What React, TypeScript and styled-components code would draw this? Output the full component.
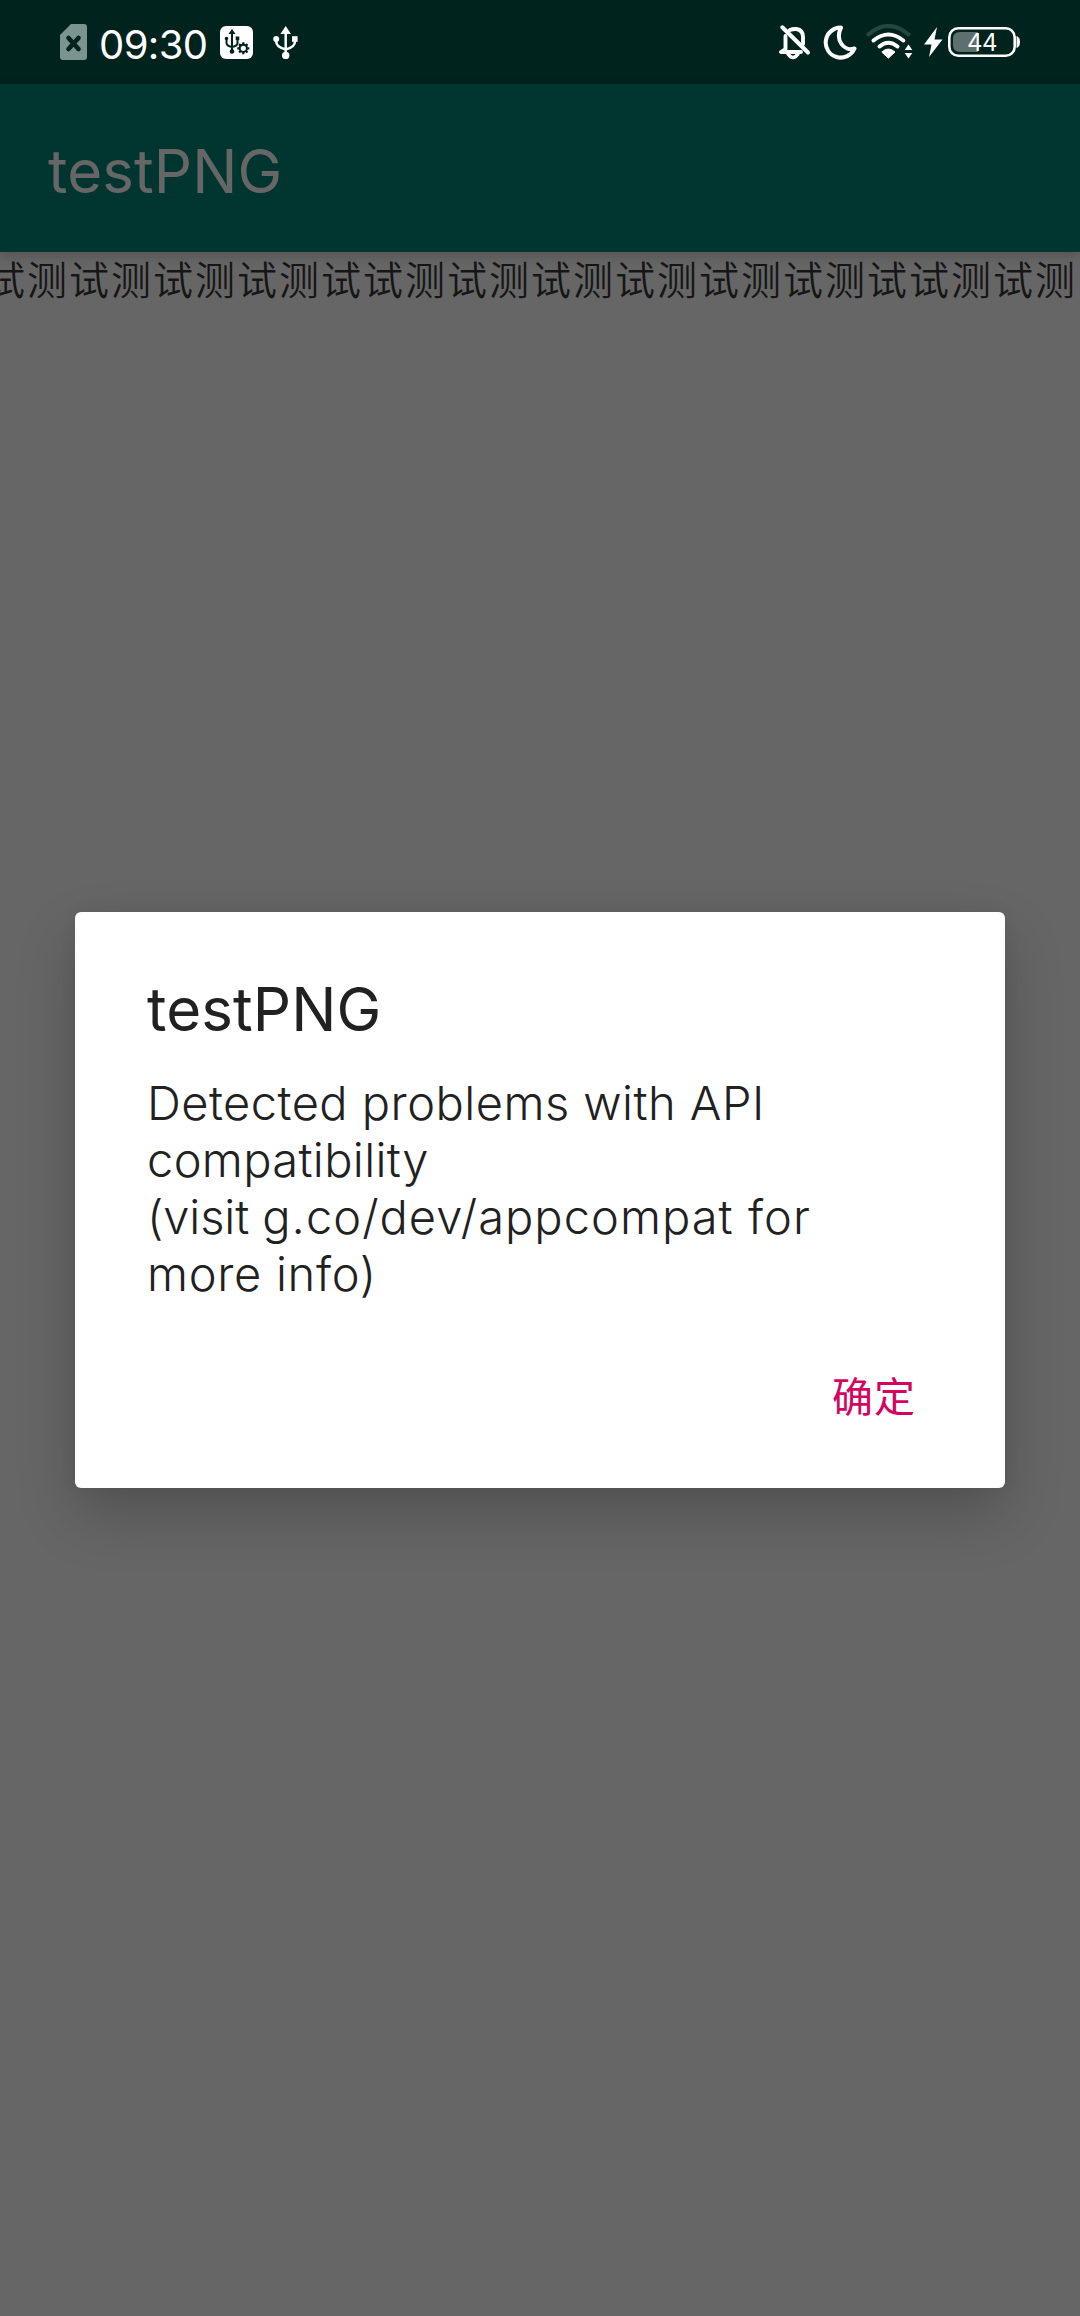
import React from "react";
import styled, { createGlobalStyle } from "styled-components";

const latin = `Inter, "Noto Sans CJK SC", sans-serif`;
const cjk = `"Noto Sans CJK SC", sans-serif`;

const GlobalStyle = createGlobalStyle`
  * { box-sizing: border-box; }
  html, body { margin: 0; padding: 0; background: #666666; }
`;

const Screen = styled.div`
  position: relative;
  display: flex;
  flex-direction: column;
  width: 1080px;
  height: 2316px;
  overflow: hidden;
  background: #666666;
  font-family: ${latin};
`;

const StatusBar = styled.header`
  display: flex;
  justify-content: space-between;
  flex: none;
  height: 84px;
  padding: 24px 59px 24px 60px;
  background: #00231e;
  color: #fff;
`;

const StatusGroup = styled.div`
  display: flex;
  align-items: flex-start;
  height: 36px;
`;

const Clock = styled.span`
  width: 113px;
  margin-left: 12px;
  font-size: 40px;
  line-height: 41px;
  letter-spacing: -0.6px;
  white-space: nowrap;
`;

const Glyph = styled.svg<{ $gap?: number }>`
  display: block;
  flex: none;
  margin-left: ${(p) => p.$gap ?? 0}px;
`;

const Battery = styled.div`
  position: relative;
  display: flex;
  width: 73px;
  height: 36px;
  margin-left: 5px;
`;

const BatteryLevel = styled.span`
  position: absolute;
  left: 0;
  top: 4px;
  width: 68px;
  text-align: center;
  font-size: 24px;
  line-height: 30px;
  letter-spacing: -0.5px;
`;

const AppBar = styled.div`
  position: relative;
  z-index: 1;
  display: flex;
  align-items: center;
  flex: none;
  height: 168px;
  padding: 6px 48px 0;
  background: #003530;
  box-shadow: 0 4px 10px rgba(0, 0, 0, 0.18);
`;

const AppTitle = styled.h1`
  margin: 0;
  font-size: 60px;
  font-weight: 400;
  line-height: 72px;
  letter-spacing: 0.1px;
  color: #666666;
`;

const Content = styled.main`
  display: flex;
  justify-content: flex-start;
  flex: 1;
  overflow: hidden;
`;

const Marquee = styled.p`
  margin: 0 0 0 -15px;
  font-family: ${cjk};
  font-size: 40px;
  font-weight: 350;
  line-height: 53px;
  letter-spacing: 2px;
  white-space: nowrap;
  color: #161616;
`;

const Overlay = styled.div`
  position: absolute;
  inset: 84px 0 0;
  display: flex;
  justify-content: center;
  align-items: flex-start;
  padding-top: 828px;
  z-index: 2;
`;

const Dialog = styled.section`
  display: flex;
  flex-direction: column;
  width: 930px;
  height: 576px;
  padding: 61px 72px 0;
  border-radius: 6px;
  background: #fff;
  color: #212121;
  box-shadow: 0 26px 60px rgba(0, 0, 0, 0.2), 0 0 16px rgba(0, 0, 0, 0.06);
`;

const DialogTitle = styled.h2`
  margin: 0;
  font-size: 60px;
  font-weight: 400;
  line-height: 72px;
  letter-spacing: 0.1px;
`;

const Message = styled.div`
  margin-top: 29px;
  font-size: 47px;
  font-weight: 300;
  line-height: 57px;
  white-space: pre-line;
`;

const Run = styled.span<{ $tracking: number }>`
  letter-spacing: ${(p) => p.$tracking}px;
`;

const Actions = styled.div`
  display: flex;
  justify-content: flex-end;
  margin-top: 62px;
  padding-right: 17px;
`;

const ConfirmButton = styled.button`
  border: 0;
  padding: 0;
  background: none;
  font-family: ${cjk};
  font-size: 41px;
  font-weight: 400;
  line-height: 60px;
  letter-spacing: 1px;
  color: #d4045f;
`;

const SimIcon = () => (
  <Glyph width="27" height="36" viewBox="0 0 27 36">
    <path d="M11 0H24a3 3 0 0 1 3 3V33a3 3 0 0 1-3 3H3a3 3 0 0 1-3-3V11Z" fill="#7b9490" />
    <path d="M8.5 14L18.5 25M18.5 14L8.5 25" stroke="#00231e" strokeWidth="4.6" strokeLinecap="round" />
  </Glyph>
);

const DebugIcon = () => (
  <Glyph $gap={8} width="33" height="36" viewBox="0 0 33 36">
    <rect x="0" y="2" width="33" height="33" rx="6" fill="#fff" />
    <g stroke="#00231e" fill="none" strokeWidth="2">
      <path d="M12 8V27M6.5 15v4q0 3 5.5 4M17.5 14v5q0 3-5.5 4" />
      <circle cx="23.3" cy="24.3" r="3.6" strokeWidth="2" />
      <path
        d="M23.3 18.3v2.2M23.3 28.1v2.2M17.3 24.3h2.2M27.1 24.3h2.2M19.1 20.1l1.5 1.5M26 27l1.5 1.5M27.5 20.1l-1.5 1.5M20.6 27l-1.5 1.5"
        strokeWidth="2.2"
      />
    </g>
    <path d="M12 5l3.5 5h-7Z" fill="#00231e" />
    <circle cx="6.5" cy="14.5" r="1.8" fill="#00231e" />
    <rect x="15.7" y="12.5" width="3.6" height="3.6" fill="#00231e" />
    <circle cx="12" cy="27.5" r="2.3" fill="#00231e" />
  </Glyph>
);

const UsbIcon = () => (
  <Glyph $gap={20} width="25" height="36" viewBox="0 0 25 36">
    <path
      d="M12.7 6V30M3.2 15v2.5q0 5.5 9.5 8M22 15v2.5q0 5.5-9.3 8"
      stroke="#fff"
      strokeWidth="2.5"
      fill="none"
    />
    <path d="M12.7 2L18 10H7.4Z" fill="#fff" />
    <circle cx="3.2" cy="15" r="3" fill="#fff" />
    <rect x="19" y="12.2" width="5.6" height="5.6" fill="#fff" />
    <circle cx="12.7" cy="31.4" r="3.7" fill="#fff" />
  </Glyph>
);

const BellOffIcon = () => (
  <Glyph width="32" height="36" viewBox="0 0 32 36">
    <g fill="none" stroke="#fff" strokeLinecap="round" strokeLinejoin="round">
      <path d="M6.5 12V25L2 28H22M11 6Q13.5 4.8 17.5 5Q24 6 24 13V20" strokeWidth="3.9" />
      <path d="M9 30Q14 37 19 30" strokeWidth="3.6" />
      <path d="M3.3 3.3L29 28.5" strokeWidth="4.1" />
    </g>
  </Glyph>
);

const MoonIcon = () => (
  <Glyph $gap={12} width="34" height="36" viewBox="0 0 34 36">
    <path
      d="M18 3.6A15 15 0 1 0 31.5 24.5C22 28 11.5 17 18 3.6Z"
      fill="none"
      stroke="#fff"
      strokeWidth="4"
      strokeLinejoin="round"
    />
  </Glyph>
);

const WifiIcon = () => (
  <Glyph $gap={9} width="47" height="36" viewBox="0 0 47 36">
    <g fill="none" strokeWidth="4" strokeLinecap="round">
      <path d="M2.3 10.5Q22.3-6.5 42.5 10.5" stroke="#24473f" />
      <path d="M7.5 16.5Q22.3 4.5 37.3 16.5" stroke="#fff" />
      <path d="M13.5 22.5Q22.3 15 31.5 22.5" stroke="#fff" />
    </g>
    <path d="M22.3 34.2L15.8 28Q22.3 22 29 28Z" fill="#fff" stroke="#fff" strokeLinejoin="round" />
    <path d="M42.5 20.5l3.8 5.5h-7.6ZM42.5 34.5l3.8-5.5h-7.6Z" fill="#fff" />
  </Glyph>
);

const BoltIcon = () => (
  <Glyph $gap={11} width="19" height="36" viewBox="0 0 19 36">
    <path d="M13 3L0 20.5H7.5L5 33L18.5 15.5H10.5Z" fill="#fff" />
  </Glyph>
);

const BatteryShape = () => (
  <Glyph width="73" height="36" viewBox="0 0 73 36">
    <path d="M12 8H30V28H12Q5 28 5 21V15Q5 8 12 8Z" fill="#5d706d" />
    <rect x="1.3" y="4.3" width="65.4" height="27.4" rx="9" fill="none" stroke="#fff" strokeWidth="2.6" />
    <path d="M69 12.5Q71.5 13.5 71.5 18T69 23.5Z" fill="#fff" stroke="#fff" />
  </Glyph>
);

const unit = "试测试测试测试测试试测试测";

const messageRuns = [
  { text: "Detected problems with API\n", tracking: 0.47 },
  { text: "compatibility\n", tracking: 0.35 },
  { text: "(visit ", tracking: -0.1 },
  { text: "g.co/dev/appcompat for\n", tracking: 1.04 },
  { text: "more info)", tracking: 0.7 },
];

export default function App() {
  return (
    <>
      <GlobalStyle />
      <Screen>
        <StatusBar>
          <StatusGroup>
            <SimIcon />
            <Clock>09:30</Clock>
            <DebugIcon />
            <UsbIcon />
          </StatusGroup>
          <StatusGroup>
            <BellOffIcon />
            <MoonIcon />
            <WifiIcon />
            <BoltIcon />
            <Battery>
              <BatteryShape />
              <BatteryLevel>44</BatteryLevel>
            </Battery>
          </StatusGroup>
        </StatusBar>
        <AppBar>
          <AppTitle>testPNG</AppTitle>
        </AppBar>
        <Content>
          <Marquee>{unit + unit}</Marquee>
        </Content>
        <Overlay>
          <Dialog role="dialog">
            <DialogTitle>testPNG</DialogTitle>
            <Message>
              {messageRuns.map((run) => (
                <Run key={run.text} $tracking={run.tracking}>
                  {run.text}
                </Run>
              ))}
            </Message>
            <Actions>
              <ConfirmButton>确定</ConfirmButton>
            </Actions>
          </Dialog>
        </Overlay>
      </Screen>
    </>
  );
}
